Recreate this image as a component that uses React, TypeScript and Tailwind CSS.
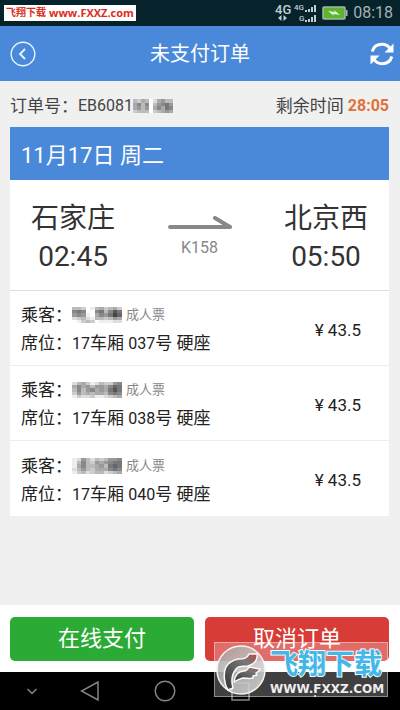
import type { ReactNode } from "react";

type Passenger = {
  id: number;
  carriage: string;
  seat: string;
  price: string;
  mask: string[];
};

// one hex digit per mosaic block, 0 = dark, f = white
const passengers: Passenger[] = [
  {
    id: 1,
    carriage: "17",
    seat: "037",
    price: "43.5",
    mask: ["bbcfebacbac", "878ff87b857", "989efa89746", "dcbdebbcb9a", "fecbcfeeedd"],
  },
  {
    id: 2,
    carriage: "17",
    seat: "038",
    price: "43.5",
    mask: ["dbacedbcc98", "a8a9b99a867", "b8b98a9a757", "c9babaab878", "ecddceedcba"],
  },
  {
    id: 3,
    carriage: "17",
    seat: "040",
    price: "43.5",
    mask: ["ed9bdbcb998", "eb8bc9a9877", "ea8bba9b767", "db9bcaaa878", "ecbdcbbdcba"],
  },
];

const orderMask = ["bcabfda9bb", "a8b8fb9879", "a9b9fa8a78", "cbbbfcba9a"];

function Mosaic({ rows, className }: { rows: string[]; className: string }) {
  return (
    <svg
      className={className}
      viewBox={`0 0 ${rows[0].length} ${rows.length}`}
      preserveAspectRatio="none"
      shapeRendering="crispEdges"
      aria-hidden="true"
    >
      {rows.map((row, y) =>
        row.split("").map((level, x) => (
          <rect key={`${x}-${y}`} x={x} y={y} width="1" height="1" fill={`#${level.repeat(3)}`} />
        ))
      )}
    </svg>
  );
}

function SignalBars() {
  return (
    <svg className="h-5 w-[42px]" viewBox="0 0 42 20" fill="#c3ced1" aria-hidden="true">
      <text x="0" y="11" fontSize="13" fontWeight="500" fontFamily="Roboto, sans-serif">4G</text>
      <path d="M6.500 12v6L3 15zM8.500 12v6L12 15z" />
      <text x="19" y="7" fontSize="8" fontWeight="500" fontFamily="Roboto, sans-serif">4G</text>
      <text x="24" y="18" fontSize="8" fontWeight="500" fontFamily="Roboto, sans-serif">G</text>
      <path d="M30 7h2v2h-2zM33 6h2v3h-2zM36 4h2v5h-2zM39 2h2v7h-2z" />
      <path d="M30 17h2v2h-2zM33 16h2v3h-2zM36 14h2v5h-2zM39 12h2v7h-2z" />
    </svg>
  );
}

function Battery() {
  return (
    <svg className="h-[14px] w-[26px]" viewBox="0 0 26 14" aria-hidden="true">
      <rect x="1" y="1" width="22" height="12" rx="1" fill="#5db52c" stroke="#a9b3b0" strokeWidth="1.500" />
      <path d="M24 4h1.500v6H24z" fill="#a9b3b0" />
      <path d="M6 5l7 1-1-2 6 5-7-1 1 2z" fill="#e4f2dc" />
    </svg>
  );
}

function StatusBar() {
  return (
    <div className="flex h-[26px] items-center justify-between bg-[#06232b] pl-1 pr-[7px]">
      <div className="flex h-4 items-center gap-[3px] bg-white px-[2px] font-bold text-[#dc2b22]">
        <span className="text-[10px] leading-4">飞翔下载</span>
        <span className="font-['Open_Sans',sans-serif] text-[11px] leading-4">www.FXXZ.com</span>
      </div>
      <div className="flex items-center gap-[5px]">
        <SignalBars />
        <Battery />
        <span className="text-[16px] leading-5 text-[#a7b2b5]">08:18</span>
      </div>
    </div>
  );
}

function Header() {
  return (
    <header className="flex h-[55px] items-center justify-between bg-[#4a89d9] px-[6px] text-white">
      <button type="button" aria-label="返回" className="w-8 pl-1">
        <svg className="size-[26px]" viewBox="0 0 26 26" fill="none" stroke="#e8f6ff">
          <circle cx="13" cy="13" r="11.800" strokeWidth="1.400" />
          <path d="M15 8l-5 5 5 5" strokeWidth="1.800" />
        </svg>
      </button>
      <h1 className="text-[20px] leading-7">未支付订单</h1>
      <button type="button" aria-label="刷新" className="flex w-8 justify-end">
        <svg className="size-6" viewBox="0 0 24 24" fill="none" stroke="#fff" strokeWidth="3">
          <path d="M2.200 9.500C3.500 4.800 7.500 2.300 12 2.300c3.500 0 6.300 1.500 8.300 4.700" />
          <path d="M21.800 14.500C20.500 19.200 16.500 21.700 12 21.700c-3.500 0-6.300-1.500-8.300-4.700" />
          <path d="M23.500 1.500v9H14.500zM.5 22.500v-9H9.500z" fill="#fff" stroke="none" />
        </svg>
      </button>
    </header>
  );
}

function Station({ name, time }: { name: string; time: string }) {
  return (
    <div className="text-center text-[28px] leading-[38px] text-[#333]">
      <div>{name}</div>
      <div>{time}</div>
    </div>
  );
}

function PassengerRow({ passenger }: { passenger: Passenger }) {
  return (
    <li className="flex h-[75px] items-center justify-between border-b border-[#ededed] pl-[11px] pr-7 pt-[3px] text-[17px] leading-7 text-[#222] last:border-b-0">
      <div>
        <div className="flex items-center">
          <span>乘客：</span>
          <Mosaic rows={passenger.mask} className="h-4 w-[50px]" />
          <span className="ml-1 text-[13px] text-[#888]">成人票</span>
        </div>
        <div>
          席位：<span className="text-[16px]">{passenger.carriage}</span>车厢{" "}
          <span className="text-[16px]">{passenger.seat}</span>号 硬座
        </div>
      </div>
      <span>¥ {passenger.price}</span>
    </li>
  );
}

function ActionButton({ className, children }: { className: string; children: ReactNode }) {
  return (
    <button type="button" className={`h-11 flex-1 rounded-[5px] text-[22px] leading-8 text-white ${className}`}>
      {children}
    </button>
  );
}

function NavButton({ label, children }: { label: string; children: ReactNode }) {
  return (
    <button type="button" aria-label={label} className="flex flex-1 justify-center">
      {children}
    </button>
  );
}

function NavBar() {
  return (
    <nav className="flex h-[38px] items-center bg-black pl-[26px] pr-12">
      <button type="button" aria-label="收起" className="mr-[14px]">
        <svg className="size-3" viewBox="0 0 12 12" fill="none" stroke="#858585" strokeWidth="1.500">
          <path d="M1.500 4L6 8.500 10.500 4" />
        </svg>
      </button>
      <NavButton label="后退">
        <svg className="size-5" viewBox="0 0 20 20" fill="none" stroke="#858585" strokeWidth="1.500">
          <path d="M18 1v18L1.500 10z" />
        </svg>
      </NavButton>
      <NavButton label="主页">
        <svg className="size-[22px]" viewBox="0 0 22 22" fill="none" stroke="#858585" strokeWidth="1.500">
          <circle cx="11" cy="11" r="9.800" />
        </svg>
      </NavButton>
      <NavButton label="最近任务">
        <svg className="size-5" viewBox="0 0 20 20" fill="none" stroke="#858585" strokeWidth="1.500">
          <rect x="2" y="2" width="17" height="17" />
        </svg>
      </NavButton>
      <NavButton label="菜单">
        <svg className="h-5 w-[14px]" viewBox="0 0 14 20" fill="#b5b5b5">
          <path d="M6 8h2v2H6zM6 14h2v2H6z" />
        </svg>
      </NavButton>
    </nav>
  );
}

function Watermark() {
  return (
    <div className="pointer-events-none absolute bottom-[13px] right-3 flex h-[55px] w-[174px] items-center border border-white/40 bg-white/25">
      <svg className="size-[52px] shrink-0" viewBox="0 0 52 52" aria-hidden="true">
        <defs>
          <linearGradient id="disc" x1="0" y1="0" x2="1" y2="1">
            <stop offset="0" stopColor="#a5a0a0" />
            <stop offset="1" stopColor="#dedede" />
          </linearGradient>
          <linearGradient id="swoosh" x1="0" y1="1" x2="1" y2="0">
            <stop offset="0" stopColor="#333" />
            <stop offset=".7" stopColor="#777" />
            <stop offset="1" stopColor="#b0504d" />
          </linearGradient>
        </defs>
        <circle cx="26" cy="26" r="24" fill="url(#disc)" fillOpacity=".85" stroke="#f4f4f4" strokeWidth="1.500" />
        <g fill="url(#swoosh)" stroke="#fafafa" strokeWidth="1.500" strokeLinejoin="round">
          <path d="M13 46C9 40 8 29 11 23c3-5 7-7 12-8 5 0 9 0 11-5l8 0c1 6-3 10-9 12-5 1-9-1-12 3-4 5-5 12-3 19z" />
          <path d="M19 38c1-7 4-11 10-11 3 0 4-2 5-4l11 2c-1 2-2 3-4 4l1 2-4 1 0 2c-4 1-6 0-10 0-4 1-6 2-9 4z" />
        </g>
      </svg>
      <div className="flex flex-col whitespace-nowrap pl-[3px] pt-[7px]">
        <span className="text-[28px] font-bold leading-8 text-[#43b7e8] [-webkit-text-stroke:2px_#f2fbff] [paint-order:stroke_fill]">
          飞翔下载
        </span>
        <span className="font-['DejaVu_Sans',sans-serif] text-[12px] font-bold leading-4 text-[#eee]">WWW.FXXZ.COM</span>
      </div>
    </div>
  );
}

export default function App() {
  return (
    <div className="relative flex min-h-screen flex-col bg-[#f0f0f0] font-[Roboto,'Noto_Sans_CJK_SC',sans-serif]">
      <StatusBar />
      <Header />

      <main className="flex-1 pl-[10px] pr-[11px]">
        <div className="flex h-[46px] items-center justify-between pt-[3px] text-[17px] leading-6 text-[#444]">
          <div className="flex items-center">
            <span>订单号：</span>
            <span className="text-[16px]">EB6081</span>
            <Mosaic rows={orderMask} className="h-[14px] w-10" />
          </div>
          <div className="flex items-center gap-1">
            <span>剩余时间</span>
            <span className="text-[16px] font-bold text-[#e2703a]">28:05</span>
          </div>
        </div>

        <section className="bg-white">
          <h2 className="flex h-[53px] items-center bg-[#4a89d9] px-[11px] pt-1 text-[22px] leading-8 text-white">
            11月17日 周二
          </h2>
          <div className="flex h-[111px] items-center justify-between border-b border-[#ddd] px-[21px] pt-[6px]">
            <Station name="石家庄" time="02:45" />
            <div className="flex flex-col items-center gap-1 text-[16px] leading-6 text-[#888]">
              <svg className="h-4 w-16" viewBox="0 0 64 16" fill="none" stroke="#888" strokeWidth="4" strokeLinecap="round" aria-hidden="true">
                <path d="M2 11h60M47 2l15 9" />
              </svg>
              <span>K158</span>
            </div>
            <Station name="北京西" time="05:50" />
          </div>
          <ul>
            {passengers.map((passenger) => (
              <PassengerRow key={passenger.id} passenger={passenger} />
            ))}
          </ul>
        </section>
      </main>

      <footer>
        <div className="flex gap-[11px] bg-white pb-[11px] pl-[10px] pr-[11px] pt-3">
          <ActionButton className="bg-[#2baa35]">在线支付</ActionButton>
          <ActionButton className="bg-[#d73c37]">取消订单</ActionButton>
        </div>
        <NavBar />
      </footer>
      <Watermark />
    </div>
  );
}
